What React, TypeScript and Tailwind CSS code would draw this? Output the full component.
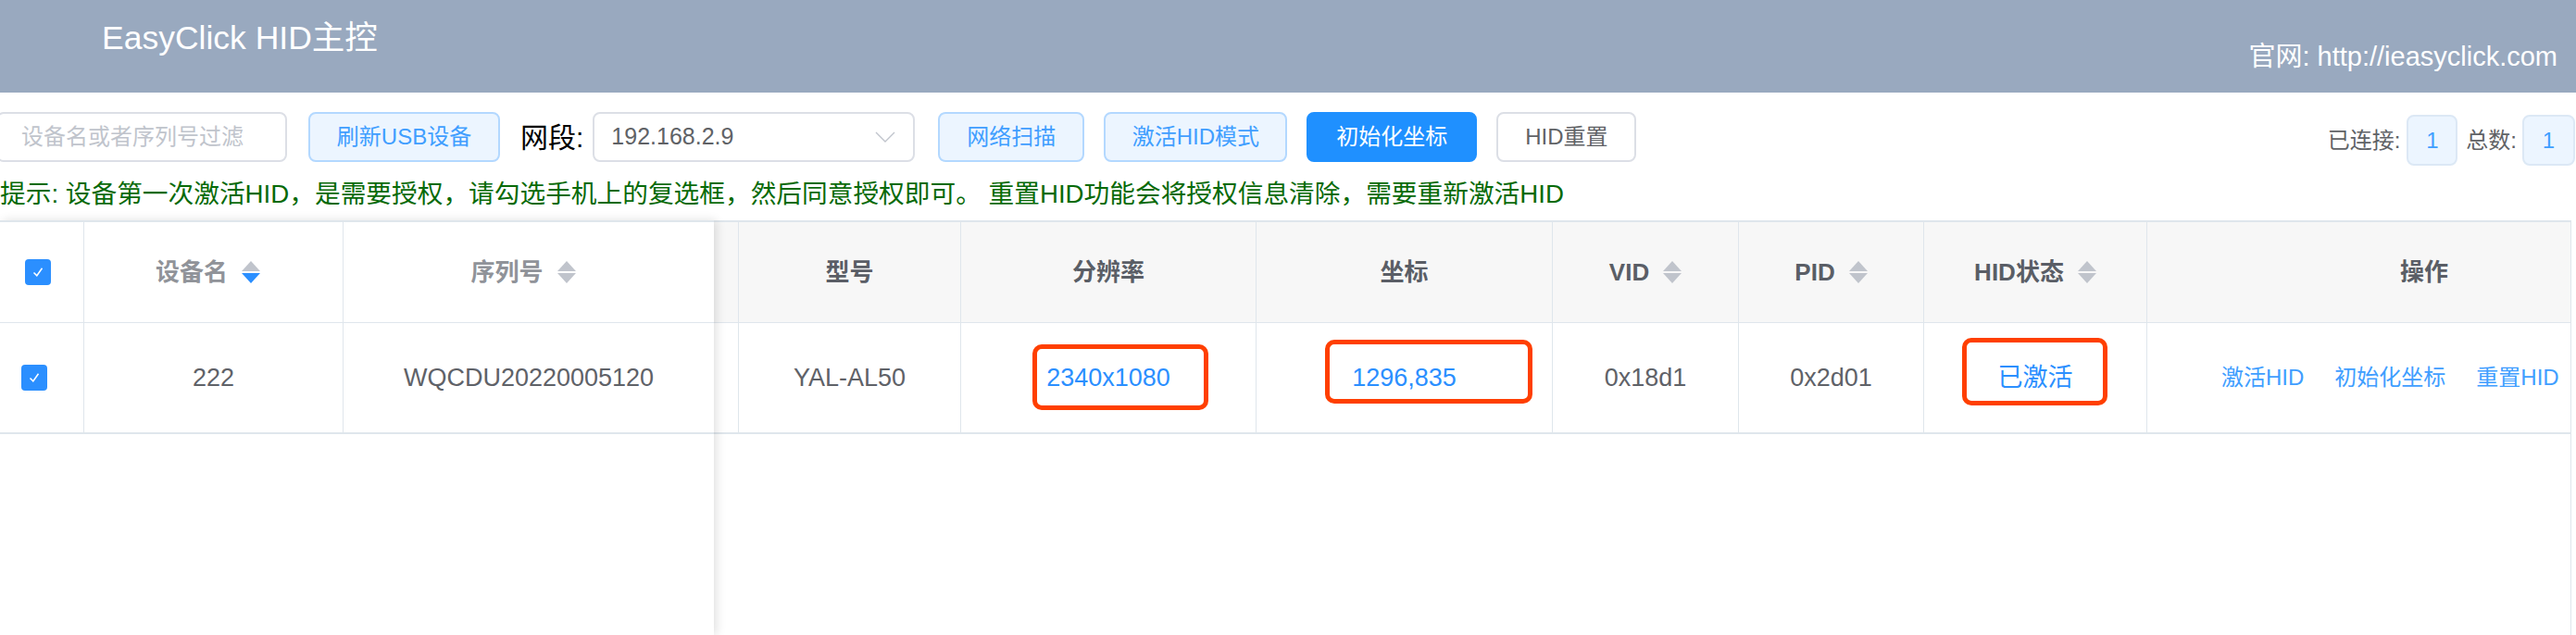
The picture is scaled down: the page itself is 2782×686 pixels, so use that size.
import React from "react";

function SortIcon({ desc }: { desc?: boolean }) {
  return (
    <span className="ml-[15px] inline-flex flex-col gap-[2px]">
      <svg width="20" height="11" viewBox="0 0 20 11">
        <path d="M10 0 L20 11 L0 11 Z" fill="#c0c4cc" />
      </svg>
      <svg width="20" height="11" viewBox="0 0 20 11">
        <path d="M0 0 L20 0 L10 11 Z" fill={desc ? "#2b8fff" : "#c0c4cc"} />
      </svg>
    </span>
  );
}

function Checkbox() {
  return (
    <span className="flex h-[28px] w-[28px] items-center justify-center rounded-[4px] bg-[#2b8fff]">
      <svg width="16" height="16" viewBox="0 0 16 16">
        <path d="M3.5 8.5 L6.8 11.8 L12.5 3.8" stroke="white" strokeWidth="1.5" fill="none" />
      </svg>
    </span>
  );
}

export default function App() {
  return (
    <div className="flex h-[686px] w-[2782px] flex-col overflow-hidden bg-white font-['Liberation_Sans','Noto_Sans_CJK_SC',sans-serif]">
      {/* top bar */}
      <header className="flex h-[100px] shrink-0 items-start justify-between bg-[#99a9bf] pl-[110px] pr-[20px] text-white">
        <h1 className="pt-[21px] text-[35.5px] font-normal leading-[40px]">EasyClick HID主控</h1>
        <span className="pt-[43px] text-[29px] leading-[36px]">官网: http://ieasyclick.com</span>
      </header>

      {/* toolbar */}
      <div className="mt-[21px] flex h-[54px] shrink-0 items-start">
        <div className="-ml-[4px] flex h-[54px] w-[314px] items-center rounded-[8px] border-2 border-[#dcdfe6] px-[25px] text-[24px] text-[#c0c4cc]">
          设备名或者序列号过滤
        </div>
        <button className="ml-[23px] h-[54px] w-[207px] rounded-[8px] border-2 border-[#b3d8ff] bg-[#ecf5ff] text-[24px] text-[#409eff]">
          刷新USB设备
        </button>
        <span className="ml-[22px] self-center text-[30px] text-black">网段:</span>
        <div className="ml-[10px] flex h-[54px] w-[348px] items-center justify-between rounded-[8px] border-2 border-[#dcdfe6] pl-[18px] pr-[19px] text-[25px] text-[#606266]">
          <span>192.168.2.9</span>
          <svg width="22" height="12" viewBox="0 0 22 12">
            <path d="M1 1 L11 11 L21 1" stroke="#c0c4cc" strokeWidth="1.4" fill="none" />
          </svg>
        </div>
        <button className="ml-[25px] h-[54px] w-[158px] rounded-[8px] border-2 border-[#b3d8ff] bg-[#ecf5ff] text-[24px] text-[#409eff]">
          网络扫描
        </button>
        <button className="ml-[21px] h-[54px] w-[198px] rounded-[8px] border-2 border-[#b3d8ff] bg-[#ecf5ff] text-[24px] text-[#409eff]">
          激活HID模式
        </button>
        <button className="ml-[21px] h-[54px] w-[184px] rounded-[8px] border-2 border-[#1f90ff] bg-[#1f90ff] text-[24px] text-white">
          初始化坐标
        </button>
        <button className="ml-[21px] h-[54px] w-[151px] rounded-[8px] border-2 border-[#dcdfe6] bg-white text-[24px] text-[#606266]">
          HID重置
        </button>
        <div className="ml-auto mr-[1px] mt-[3px] flex items-center text-[24px] text-[#606266]">
          <span>已连接:</span>
          <span className="ml-[7px] flex h-[55px] w-[55px] items-center justify-center rounded-[8px] border-2 border-[#dce8f5] bg-[#ecf5ff] text-[#409eff]">1</span>
          <span className="ml-[9px]">总数:</span>
          <span className="ml-[6px] flex h-[55px] w-[57px] items-center justify-center rounded-[8px] border-2 border-[#dce8f5] bg-[#ecf5ff] text-[#409eff]">1</span>
        </div>
      </div>

      <p className="mt-[15px] shrink-0 whitespace-nowrap text-[27.7px] leading-[40px] text-[#086a08]">
        提示: 设备第一次激活HID，是需要授权，请勾选手机上的复选框，然后同意授权即可。 重置HID功能会将授权信息清除，需要重新激活HID
      </p>

      {/* table */}
      <div className="mt-[8px] flex min-h-0 flex-1">
        {/* fixed columns */}
        <div className="relative z-10 w-[771px] shrink-0 border-t-2 border-[#dfe6ec] bg-white shadow-[3px_0_10px_rgba(0,0,0,0.12)]">
          <div className="grid h-[109px] grid-cols-[91px_280px_400px] border-b border-[#dfe6ec] text-[26px] font-bold text-[#909399]">
            <div className="flex items-center justify-center border-r border-[#dfe6ec] pr-[9px]">
              <Checkbox />
            </div>
            <div className="flex items-center justify-center border-r border-[#dfe6ec] pr-[12px]">
              设备名
              <SortIcon desc />
            </div>
            <div className="flex items-center justify-center pr-[12px]">
              序列号
              <SortIcon />
            </div>
          </div>
          <div className="grid h-[120px] grid-cols-[91px_280px_400px] border-b-2 border-[#dfe6ec] text-[27px] text-[#5f6268]">
            <div className="flex items-center justify-center border-r border-[#dfe6ec] pr-[17px]">
              <Checkbox />
            </div>
            <div className="flex items-center justify-center border-r border-[#dfe6ec]">222</div>
            <div className="flex items-center justify-center">WQCDU20220005120</div>
          </div>
        </div>

        {/* scrolling columns */}
        <div className="mr-[5px] min-w-0 flex-1 border-r border-t-2 border-[#dfe6ec]">
          <div className="grid h-[109px] grid-cols-[27px_240px_319px_320px_201px_200px_241px_1fr] border-b border-[#dfe6ec] bg-[#f7f7f7] text-[26px] font-bold text-[#5a5e66]">
            <div className="border-r border-[#dfe6ec]" />
            <div className="flex items-center justify-center border-r border-[#dfe6ec]">型号</div>
            <div className="flex items-center justify-center border-r border-[#dfe6ec]">分辨率</div>
            <div className="flex items-center justify-center border-r border-[#dfe6ec]">坐标</div>
            <div className="flex items-center justify-center border-r border-[#dfe6ec]">
              VID
              <SortIcon />
            </div>
            <div className="flex items-center justify-center border-r border-[#dfe6ec]">
              PID
              <SortIcon />
            </div>
            <div className="flex items-center justify-center border-r border-[#dfe6ec]">
              HID状态
              <SortIcon />
            </div>
            <div className="flex items-center pl-[273px]">操作</div>
          </div>
          <div className="grid h-[120px] grid-cols-[27px_240px_319px_320px_201px_200px_241px_1fr] border-b-2 border-[#dfe6ec] text-[27px] text-[#5f6268]">
            <div className="border-r border-[#dfe6ec]" />
            <div className="flex items-center justify-center border-r border-[#dfe6ec]">YAL-AL50</div>
            <div className="flex items-center justify-center border-r border-[#dfe6ec]">
              <span className="relative inline-block leading-[40px] text-[#2b8fff]">
                2340x1080
                <span className="absolute -bottom-[15px] -left-[15px] -right-[41px] -top-[16px] rounded-[10px] border-[5px] border-[#ff3f00]" />
              </span>
            </div>
            <div className="flex items-center justify-center border-r border-[#dfe6ec]">
              <span className="relative inline-block leading-[40px] text-[#2b8fff]">
                1296,835
                <span className="absolute -bottom-[8px] -left-[29px] -right-[82px] -top-[21px] rounded-[10px] border-[5px] border-[#ff3f00]" />
              </span>
            </div>
            <div className="flex items-center justify-center border-r border-[#dfe6ec]">0x18d1</div>
            <div className="flex items-center justify-center border-r border-[#dfe6ec]">0x2d01</div>
            <div className="flex items-center justify-center border-r border-[#dfe6ec]">
              <span className="relative inline-block leading-[40px] text-[#2b8fff]">
                已激活
                <span className="absolute -bottom-[10px] -left-[39px] -right-[37px] -top-[23px] rounded-[10px] border-[5px] border-[#ff3f00]" />
              </span>
            </div>
            <div className="flex items-center gap-[33px] pl-[80px] text-[24px] text-[#409eff]">
              <span>激活HID</span>
              <span>初始化坐标</span>
              <span>重置HID</span>
            </div>
          </div>
        </div>
      </div>
    </div>
  );
}
